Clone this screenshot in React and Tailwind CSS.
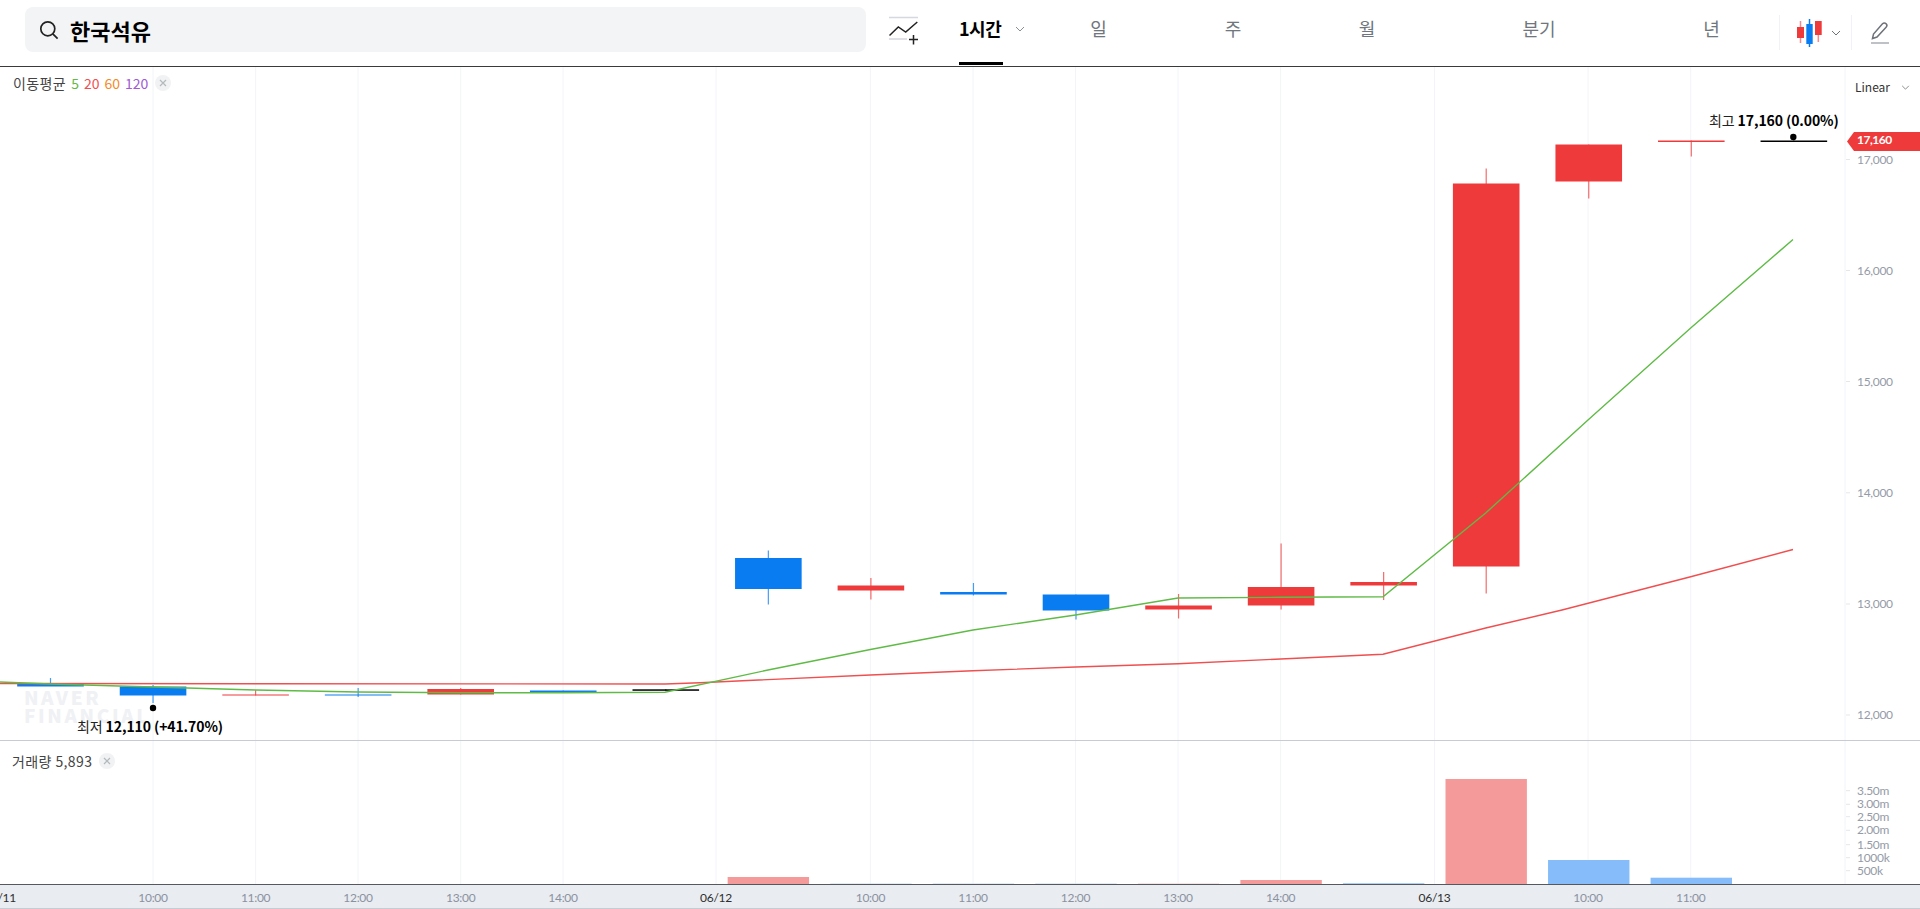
import React from "react";

const RED = "#ef3a3c";
const BLUE = "#0a7cf2";
const X = (i) => 50.5 + 102.55 * i;

const candles = [
  ["b", 683, 686.5, 678, 683],
  ["b", 686.5, 695.5, 685, 703],
  ["r", 694.5, 695.5, 690, 695.5],
  ["b", 694.5, 695.5, 688, 697],
  ["r", 689, 694.5, 688, 694.5],
  ["b", 690.5, 692, 690.5, 692],
  ["k", 689.3, 690.8, 689.3, 690.8],
  ["b", 558, 589, 550.5, 604.5],
  ["r", 585.5, 590.5, 578, 599.5],
  ["b", 592, 594.5, 583, 595.5],
  ["b", 594.5, 610.5, 594.5, 619.5],
  ["r", 605.5, 609.5, 594, 618.5],
  ["r", 587, 605.5, 543.5, 609.5],
  ["r", 582, 585.5, 572, 600],
  ["r", 183.5, 566.5, 168.5, 593.5],
  ["r", 144.5, 181.5, 144.5, 198.5],
  ["r", 140.5, 142, 140.5, 156.5],
  ["k", 140.5, 142, 140.5, 142],
];
const fill = { r: RED, b: BLUE, k: "#000000" };

const grid = [153, 255.6, 358, 460.7, 563, 716, 870.4, 973, 1075.5, 1178, 1280.6, 1434.5, 1588, 1690.7, 1845];

const ma5 =
  "0,682 50,684 153,687 255.6,690 358,692 460.7,692.7 563,692.8 665,692.3 768,670 870.4,649.5 973,630 1075.5,615 1178,598 1280.6,597.3 1383,596.7 1485.7,513 1588,420 1690.7,328 1793,239.5";
const ma20 =
  "0,683.5 665,684 700,682.7 870.4,675 973,670.7 1075.5,667 1178,663.7 1280.6,659 1383,654.3 1485.7,628 1562,610 1690.7,576.7 1793,549.5";

const prices = [
  ["17,000", 159.5],
  ["16,000", 270.5],
  ["15,000", 381.5],
  ["14,000", 492.8],
  ["13,000", 604],
  ["12,000", 715],
];

const vols = [
  ["3.50m", 790.7],
  ["3.00m", 804.3],
  ["2.50m", 816.7],
  ["2.00m", 830.3],
  ["1.50m", 844.7],
  ["1000k", 857.7],
  ["500k", 870.7],
];

const volBars = [
  [7, 877, "#f59a9a"],
  [8, 883.5, "#c4d6ec"],
  [9, 883.5, "#c4d6ec"],
  [10, 883.5, "#c4d6ec"],
  [11, 883.5, "#f3c4c4"],
  [12, 880, "#f59a9a"],
  [13, 883.3, "#86bcf9"],
  [14, 779, "#f59a9a"],
  [15, 860, "#86bcf9"],
  [16, 877.7, "#86bcf9"],
];

const times = [
  ["06/11", 0, true],
  ["10:00", 153],
  ["11:00", 255.6],
  ["12:00", 358],
  ["13:00", 460.7],
  ["14:00", 563],
  ["06/12", 716, true],
  ["10:00", 870.4],
  ["11:00", 973],
  ["12:00", 1075.5],
  ["13:00", 1178],
  ["14:00", 1280.6],
  ["06/13", 1434.5, true],
  ["10:00", 1588],
  ["11:00", 1690.7],
];

function Chevron({ className }) {
  return (
    <svg viewBox="0 0 10 6" className={className} fill="none" stroke="currentColor" strokeWidth="1">
      <path d="M1 1l4 4 4-4" />
    </svg>
  );
}

function Close() {
  return (
    <span className="flex h-4 w-4 items-center justify-center rounded-full bg-[#f1f2f4] text-[#b5b8bd]">
      <svg viewBox="0 0 8 8" className="h-2 w-2" fill="none" stroke="currentColor" strokeWidth="1.2">
        <path d="M1 1l6 6M7 1l-6 6" />
      </svg>
    </span>
  );
}

function Tab({ w, children }) {
  return <div className={`flex h-full items-center justify-center pb-2 text-[18px] text-[#70767e] ${w}`}>{children}</div>;
}

function Header() {
  return (
    <header className="flex h-[66px] items-start bg-white pl-[25px]">
      <div className="mt-[7px] flex h-[45px] w-[841px] items-center rounded-lg bg-[#f3f4f6] pl-[14px]">
        <svg viewBox="0 0 20 20" className="h-5 w-5 text-[#222222]" fill="none" stroke="currentColor" strokeWidth="1.7">
          <circle cx="8.8" cy="8.8" r="7" />
          <path d="M13.8 13.8l4.8 4.8" />
        </svg>
        <span className="ml-[11px] text-[22px] font-bold leading-none text-black">한국석유</span>
      </div>
      <svg viewBox="0 0 30 30" className="ml-[23px] mt-[16px] h-[30px] w-[30px]">
        <path d="M0 1.5h29M0 23h18" stroke="#d5d8e0" strokeWidth="1.5" fill="none" />
        <path d="M0.5 19.5L9.3 11l7.4 5L28.3 6" stroke="#222222" strokeWidth="1.5" fill="none" />
        <path d="M24.5 19v9.5M20 23.5h9" stroke="#222222" strokeWidth="1.5" fill="none" />
      </svg>
      <div className="relative ml-[40px] flex h-[65px] w-[72px] items-center pb-2">
        <span className="text-[18px] font-bold tracking-[-0.5px] text-black">1시간</span>
        <Chevron className="ml-[14px] h-[6px] w-[10px] text-[#8a8f96]" />
        <span className="absolute bottom-0 left-0 h-[3px] w-[44px] bg-black" />
      </div>
      <div className="flex h-[65px]">
        <Tab w="w-[135px]">일</Tab>
        <Tab w="w-[134px]">주</Tab>
        <Tab w="w-[134px]">월</Tab>
        <Tab w="w-[210px]">분기</Tab>
        <Tab w="w-[135px]">년</Tab>
      </div>
      <div className="mt-[15px] flex h-[35px] w-[72px] items-center border-l border-[#f1f2f4] pl-[17px]">
        <svg viewBox="0 0 25 28" className="h-[28px] w-[25px]">
          <path d="M3.5 2v22" stroke="#f58a8c" strokeWidth="1.5" />
          <rect x="0" y="8" width="7" height="11" fill={RED} />
          <path d="M12.5 0v28" stroke={BLUE} strokeWidth="1.5" />
          <rect x="9.3" y="5" width="6.4" height="20" fill={BLUE} />
          <path d="M21.3 2v21" stroke="#f58a8c" strokeWidth="1.5" />
          <rect x="18" y="2" width="6.7" height="14" fill={RED} />
        </svg>
        <Chevron className="ml-[9px] h-[6px] w-[10px] text-[#6e737a]" />
      </div>
      <div className="mt-[15px] flex h-[35px] items-center border-l border-[#f1f2f4] pl-[18px]">
        <svg viewBox="0 0 20 22" className="h-[22px] w-5" fill="none">
          <path d="M2.5 16.5L3.5 12 12.5 1.8c1-1 2.6-1 3.6 0s1 2.4 0 3.4L7 15z" stroke="#6e737a" strokeWidth="1.5" />
          <path d="M1 21h18" stroke="#a9adb3" strokeWidth="1.5" />
        </svg>
      </div>
    </header>
  );
}

function PricePane() {
  return (
    <section className="relative h-[673px] overflow-hidden">
      <svg viewBox="0 67 1920 673" className="block h-full w-full">
        {grid.map((x) => (
          <path key={x} d={`M${x} 67V740`} stroke="#f3f4f7" strokeWidth="1" />
        ))}
        <text x="24" y="705" fontSize="19" fontWeight="900" letterSpacing="2.6" fill="#eff1f4">NAVER</text>
        <text x="24" y="723" fontSize="19" fontWeight="900" letterSpacing="2.6" fill="#eff1f4">FINANCIAL</text>
        {candles.map(([t, top, bot, wt, wb], i) => (
          <g key={i}>
            <path d={`M${X(i)} ${wt}V${wb}`} stroke={fill[t]} strokeOpacity="0.75" strokeWidth="1.2" />
            <rect x={X(i) - 33.3} y={top} width="66.6" height={bot - top} fill={fill[t]} />
          </g>
        ))}
        <polyline points={ma20} fill="none" stroke="#f04f50" strokeWidth="1.4" />
        <polyline points={ma5} fill="none" stroke="#5fbb46" strokeWidth="1.4" />
        <circle cx="153" cy="708" r="3.2" fill="#000" />
        <circle cx="1793.3" cy="137" r="3.2" fill="#000" />
        <path d="M1847 141.5l7-9.5h66v19h-66z" fill={RED} />
        <text x="1857" y="144" fontSize="12" fontWeight="700" letterSpacing="-0.5" fill="#fff" fontFamily="Lato">17,160</text>
        {prices.map(([t, y]) => (
          <g key={t}>
            <path d={`M1846 ${y}h4`} stroke="#e5e7eb" />
            <text x="1857" y={y + 4} fontSize="12" letterSpacing="-0.3" fill="#959ba7" fontFamily="Lato">{t}</text>
          </g>
        ))}
      </svg>
      <div className="absolute left-[13px] top-[7px] flex items-center gap-[5px] text-[14px] leading-[18px] text-[#444444]">
        <span className="tracking-[0.4px]">이동평균</span>
        <span className="text-[#5fbb46]">5</span>
        <span className="text-[#f04f50]">20</span>
        <span className="text-[#f58a1f]">60</span>
        <span className="text-[#a05ad6]">120</span>
        <span className="ml-[2px]"><Close /></span>
      </div>
      <div className="absolute left-[1855px] top-[11px] flex items-center text-[12px] leading-[18px] text-[#333333]">
        Linear
        <Chevron className="ml-[11px] h-[5px] w-[9px] text-[#777777]" />
      </div>
      <div className="absolute left-[1709px] top-[43px] whitespace-nowrap text-[14px] leading-5 tracking-[-0.1px] text-[#222222]">
        최고 <b className="font-bold text-black">17,160 (0.00%)</b>
      </div>
      <div className="absolute left-[77px] top-[649px] whitespace-nowrap text-[14px] leading-5 tracking-[-0.1px] text-[#222222]">
        최저 <b className="font-bold text-black">12,110 (+41.70%)</b>
      </div>
    </section>
  );
}

function VolumePane() {
  return (
    <section className="relative h-[144px] overflow-hidden border-t border-[#c9cbd2]">
      <svg viewBox="0 741 1920 143" className="block h-full w-full">
        {grid.map((x) => (
          <path key={x} d={`M${x} 741V884`} stroke="#f3f4f7" strokeWidth="1" />
        ))}
        {volBars.map(([i, top, c]) => (
          <rect key={i} x={X(i) - 40.7} y={top} width="81.4" height={884 - top} fill={c} />
        ))}
        {vols.map(([t, y]) => (
          <g key={t}>
            <path d={`M1846 ${y}h4`} stroke="#e5e7eb" />
            <text x="1857" y={y + 4} fontSize="12" letterSpacing="-0.3" fill="#959ba7" fontFamily="Lato">{t}</text>
          </g>
        ))}
      </svg>
      <div className="absolute left-[12px] top-[11px] flex items-center gap-[7px] text-[14px] leading-[18px] tracking-[0.4px] text-[#444444]">
        <span>거래량 5,893</span>
        <Close />
      </div>
    </section>
  );
}

function TimeAxis() {
  return (
    <footer className="h-[25px] border-y border-b-[#c9cbd2] border-t-[#55585f] bg-[#e9ecf1]">
      <svg viewBox="0 885 1920 23" className="block h-full w-full">
        {times.map(([t, x, dark], i) => (
          <text key={i} x={x} y="901.5" textAnchor="middle" fontSize="12" letterSpacing="-0.3" fontFamily="Lato" fill={dark ? "#2e2e2e" : "#8b929f"}>{t}</text>
        ))}
      </svg>
    </footer>
  );
}

export default function App() {
  return (
    <div className="h-[909px] w-[1920px] overflow-hidden bg-white font-['Noto_Sans_CJK_KR','Noto_Sans',sans-serif]">
      <Header />
      <div className="h-[1px] bg-[#3a3a3a]" />
      <PricePane />
      <VolumePane />
      <TimeAxis />
    </div>
  );
}
